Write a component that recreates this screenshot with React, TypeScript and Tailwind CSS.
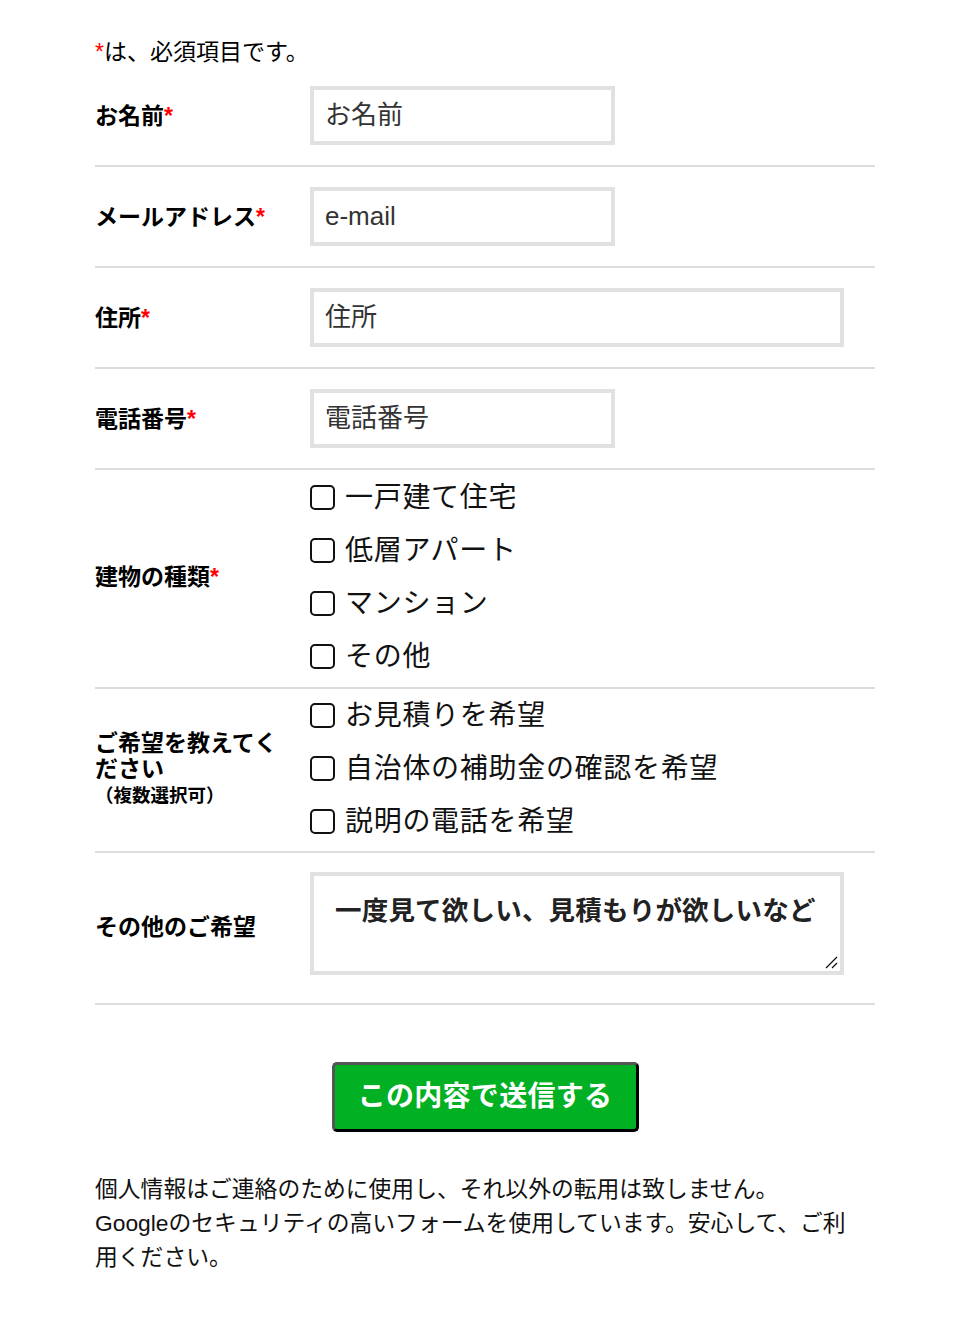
import React from "react";

const ff = { fontFamily: '"Liberation Sans", "Noto Sans CJK JP", sans-serif' };

function Req() {
  return <span className="text-[#ff0000]">*</span>;
}

function Row({ label, children, className = "" }: { label: React.ReactNode; children: React.ReactNode; className?: string }) {
  return (
    <div className={`flex items-center border-b-2 border-[#dddddd] ${className}`}>
      <div className="w-[215px] shrink-0 pr-[24px] text-[23px] font-bold leading-[26px] text-black">{label}</div>
      <div className="flex-1">{children}</div>
    </div>
  );
}

function TextInput({ placeholder, wide }: { placeholder: string; wide?: boolean }) {
  return (
    <input
      type="text"
      placeholder={placeholder}
      className={`block h-[59px] ${wide ? "w-[534px]" : "w-[305px]"} border-4 border-[#e1e1e1] bg-white px-[11px] text-[26px] text-[#222] outline-none placeholder:text-[#333]`}
      style={ff}
    />
  );
}

function Check({ label }: { label: string }) {
  return (
    <label className="flex h-[53px] items-center gap-[10px] text-[28px] tracking-[0.7px] text-[#111]">
      <span className="block h-[25px] w-[25px] rounded-[5px] border-2 border-[#111] bg-white" />
      <span>{label}</span>
    </label>
  );
}

export default function App() {
  return (
    <div className="min-h-[1328px] bg-white" style={ff}>
      <div className="mx-auto w-[780px] pt-[37px]">
        <p className="text-[23px] leading-[30px] text-black">
          <Req />
          は、必須項目です。
        </p>
        <Row label={<>お名前<Req /></>} className="pt-[19px] pb-[20px]">
          <TextInput placeholder="お名前" />
        </Row>
        <Row label={<>メールアドレス<Req /></>} className="py-[20px]">
          <TextInput placeholder="e-mail" />
        </Row>
        <Row label={<>住所<Req /></>} className="py-[20px]">
          <TextInput placeholder="住所" wide />
        </Row>
        <Row label={<>電話番号<Req /></>} className="py-[20px]">
          <TextInput placeholder="電話番号" />
        </Row>
        <Row label={<>建物の種類<Req /></>} className="pt-[1px] pb-[4px]">
          <Check label="一戸建て住宅" />
          <Check label="低層アパート" />
          <Check label="マンション" />
          <Check label="その他" />
        </Row>
        <Row
          label={
            <div className="pt-[2px]">
              <div>ご希望を教えてください</div>
              <div className="text-[18.5px] leading-[28px]">（複数選択可）</div>
            </div>
          }
          className="pt-0 pb-[3px]"
        >
          <Check label="お見積りを希望" />
          <Check label="自治体の補助金の確認を希望" />
          <Check label="説明の電話を希望" />
        </Row>
        <Row label={<div className="pt-[6px]">その他のご希望</div>} className="pt-[19px] pb-[28px]">
          <div className="relative w-[534px]">
            <textarea
              placeholder="一度見て欲しい、見積もりが欲しいなど"
              className="block h-[103px] w-[534px] resize-none border-4 border-[#e1e1e1] bg-white px-[21px] pt-[16px] text-[26.5px] font-bold tracking-[0.2px] text-[#222] outline-none placeholder:text-[#222]"
              style={ff}
            />
            <svg className="absolute bottom-[6px] right-[6px]" width="13" height="13" viewBox="0 0 13 13">
              <path d="M1 12 L12 1" stroke="#111" strokeWidth="1.3" />
              <path d="M7 12 L12 7" stroke="#111" strokeWidth="1.3" />
            </svg>
          </div>
        </Row>
        <div className="mt-[57px] flex justify-center">
          <button
            type="button"
            className="h-[70px] w-[307px] rounded-[5px] border-[3px] border-t-[#555555] border-l-[#555555] border-r-black border-b-black bg-[#02b023] text-[28px] font-bold tracking-[0.3px] text-white"
            style={ff}
          >
            この内容で送信する
          </button>
        </div>
        <p className="mt-[40px] text-[22.8px] leading-[34px] text-[#111]">
          <span className="whitespace-nowrap">個人情報はご連絡のために使用し、それ以外の転用は致しません。</span>
          <br />
          <span className="whitespace-nowrap">Googleのセキュリティの高いフォームを使用しています。安心して、ご利</span>
          <br />
          <span className="whitespace-nowrap">用ください。</span>
        </p>
      </div>
    </div>
  );
}
